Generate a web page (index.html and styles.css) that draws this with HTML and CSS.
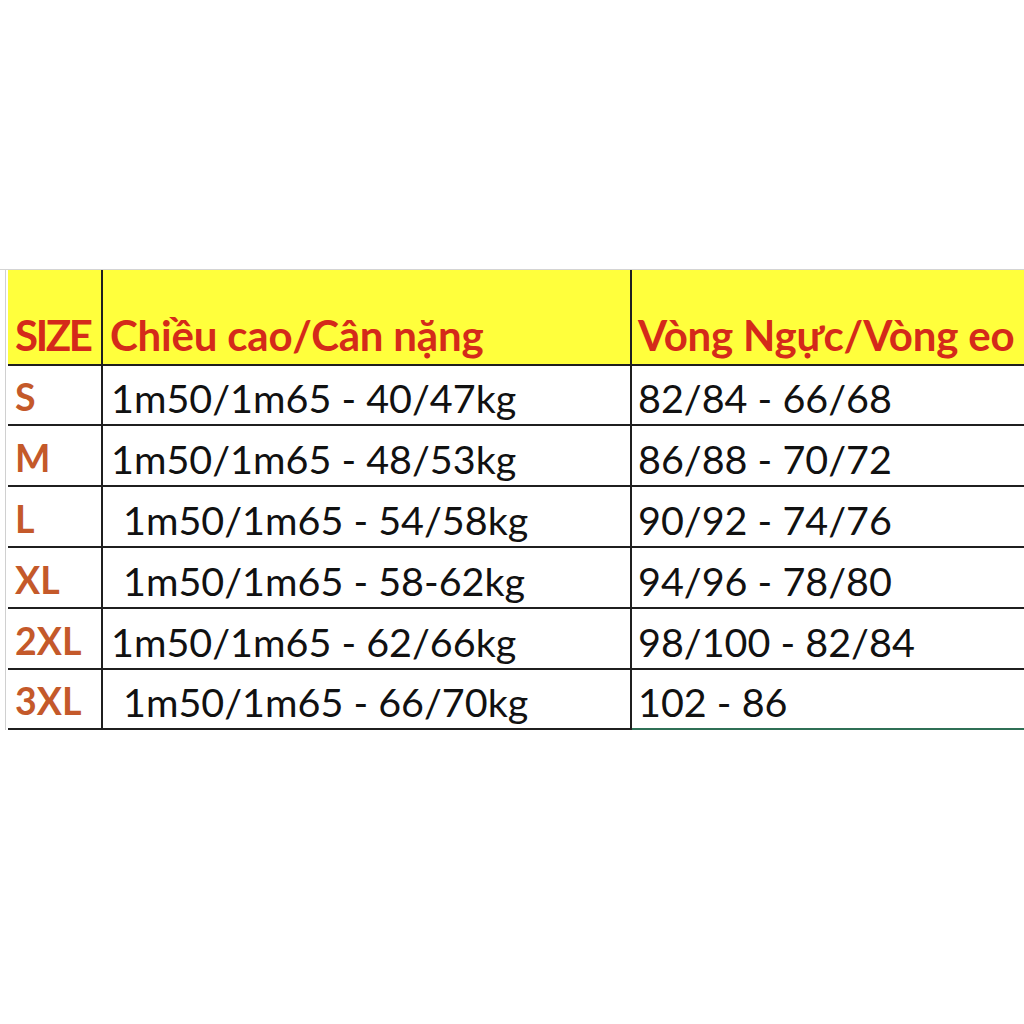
FILE: index.html
```html
<!DOCTYPE html>
<html lang="vi">
<head>
<meta charset="utf-8">
<title>Bảng size</title>
<link rel="stylesheet" href="styles.css">
</head>
<body>
<div class="sheet">
  <div class="grid">
    <div class="cell head c1">SIZE</div>
    <div class="cell head c2">Chiều cao/Cân nặng</div>
    <div class="cell head c3">Vòng Ngực/Vòng eo</div>

    <div class="cell size c1 r60">S</div>
    <div class="cell val c2 r60">1m50/1m65 - 40/47kg</div>
    <div class="cell val c3 r60">82/84 - 66/68</div>

    <div class="cell size c1">M</div>
    <div class="cell val c2">1m50/1m65 - 48/53kg</div>
    <div class="cell val c3">86/88 - 70/72</div>

    <div class="cell size c1">L</div>
    <div class="cell val c2 indent">1m50/1m65 - 54/58kg</div>
    <div class="cell val c3">90/92 - 74/76</div>

    <div class="cell size c1">XL</div>
    <div class="cell val c2 indent">1m50/1m65 - 58-62kg</div>
    <div class="cell val c3">94/96 - 78/80</div>

    <div class="cell size c1">2XL</div>
    <div class="cell val c2">1m50/1m65 - 62/66kg</div>
    <div class="cell val c3">98/100 - 82/84</div>

    <div class="cell size c1 r60">3XL</div>
    <div class="cell val c2 indent r60">1m50/1m65 - 66/70kg</div>
    <div class="cell val c3 r60 last">102 - 86</div>
  </div>
</div>
</body>
</html>
```

FILE: styles.css
```css
html, body {
  margin: 0;
  padding: 0;
  background: #ffffff;
}

body {
  width: 1024px;
  height: 1024px;
  overflow: hidden;
  font-family: Lato, "Open Sans", "DejaVu Sans", sans-serif;
}

.sheet {
  margin-top: 269px;
  border-top: 1px solid #d4d4d4;
  padding-left: 5px;
  overflow: hidden;
}

.grid {
  display: grid;
  grid-template-columns: 95px 529px 1fr;
  border-left: 1px solid #d0d0d0;
  padding-left: 2px;
}

.cell {
  box-sizing: border-box;
  display: flex;
  align-items: flex-end;
  height: 61px;
  border-bottom: 2px solid #1f1f1f;
  white-space: nowrap;
  line-height: 1;
  overflow: hidden;
}

.cell.r60 {
  height: 60px;
}

.c1, .c2 {
  border-right: 2px solid #1f1f1f;
}

.head {
  height: 96px;
  background: #ffff3c;
  color: #d42a1a;
  font-weight: 700;
  font-size: 42px;
  padding-bottom: 8px;
}

.head.c1 {
  padding-left: 7px;
  letter-spacing: -2.4px;
}

.head.c2 {
  padding-left: 7px;
  letter-spacing: -0.2px;
}

.head.c3 {
  padding-left: 6px;
  letter-spacing: -0.2px;
}

.size {
  color: #c4592a;
  font-weight: 700;
  font-size: 37.5px;
  padding-left: 7px;
  padding-bottom: 9px;
}

.val {
  color: #111111;
  font-size: 39.5px;
  padding-bottom: 7px;
}

.val.c2 {
  padding-left: 8px;
}

.val.c2.indent {
  padding-left: 20px;
}

.val.c3 {
  padding-left: 6px;
}

.val.last {
  border-bottom-color: #2f6f55;
}
```
